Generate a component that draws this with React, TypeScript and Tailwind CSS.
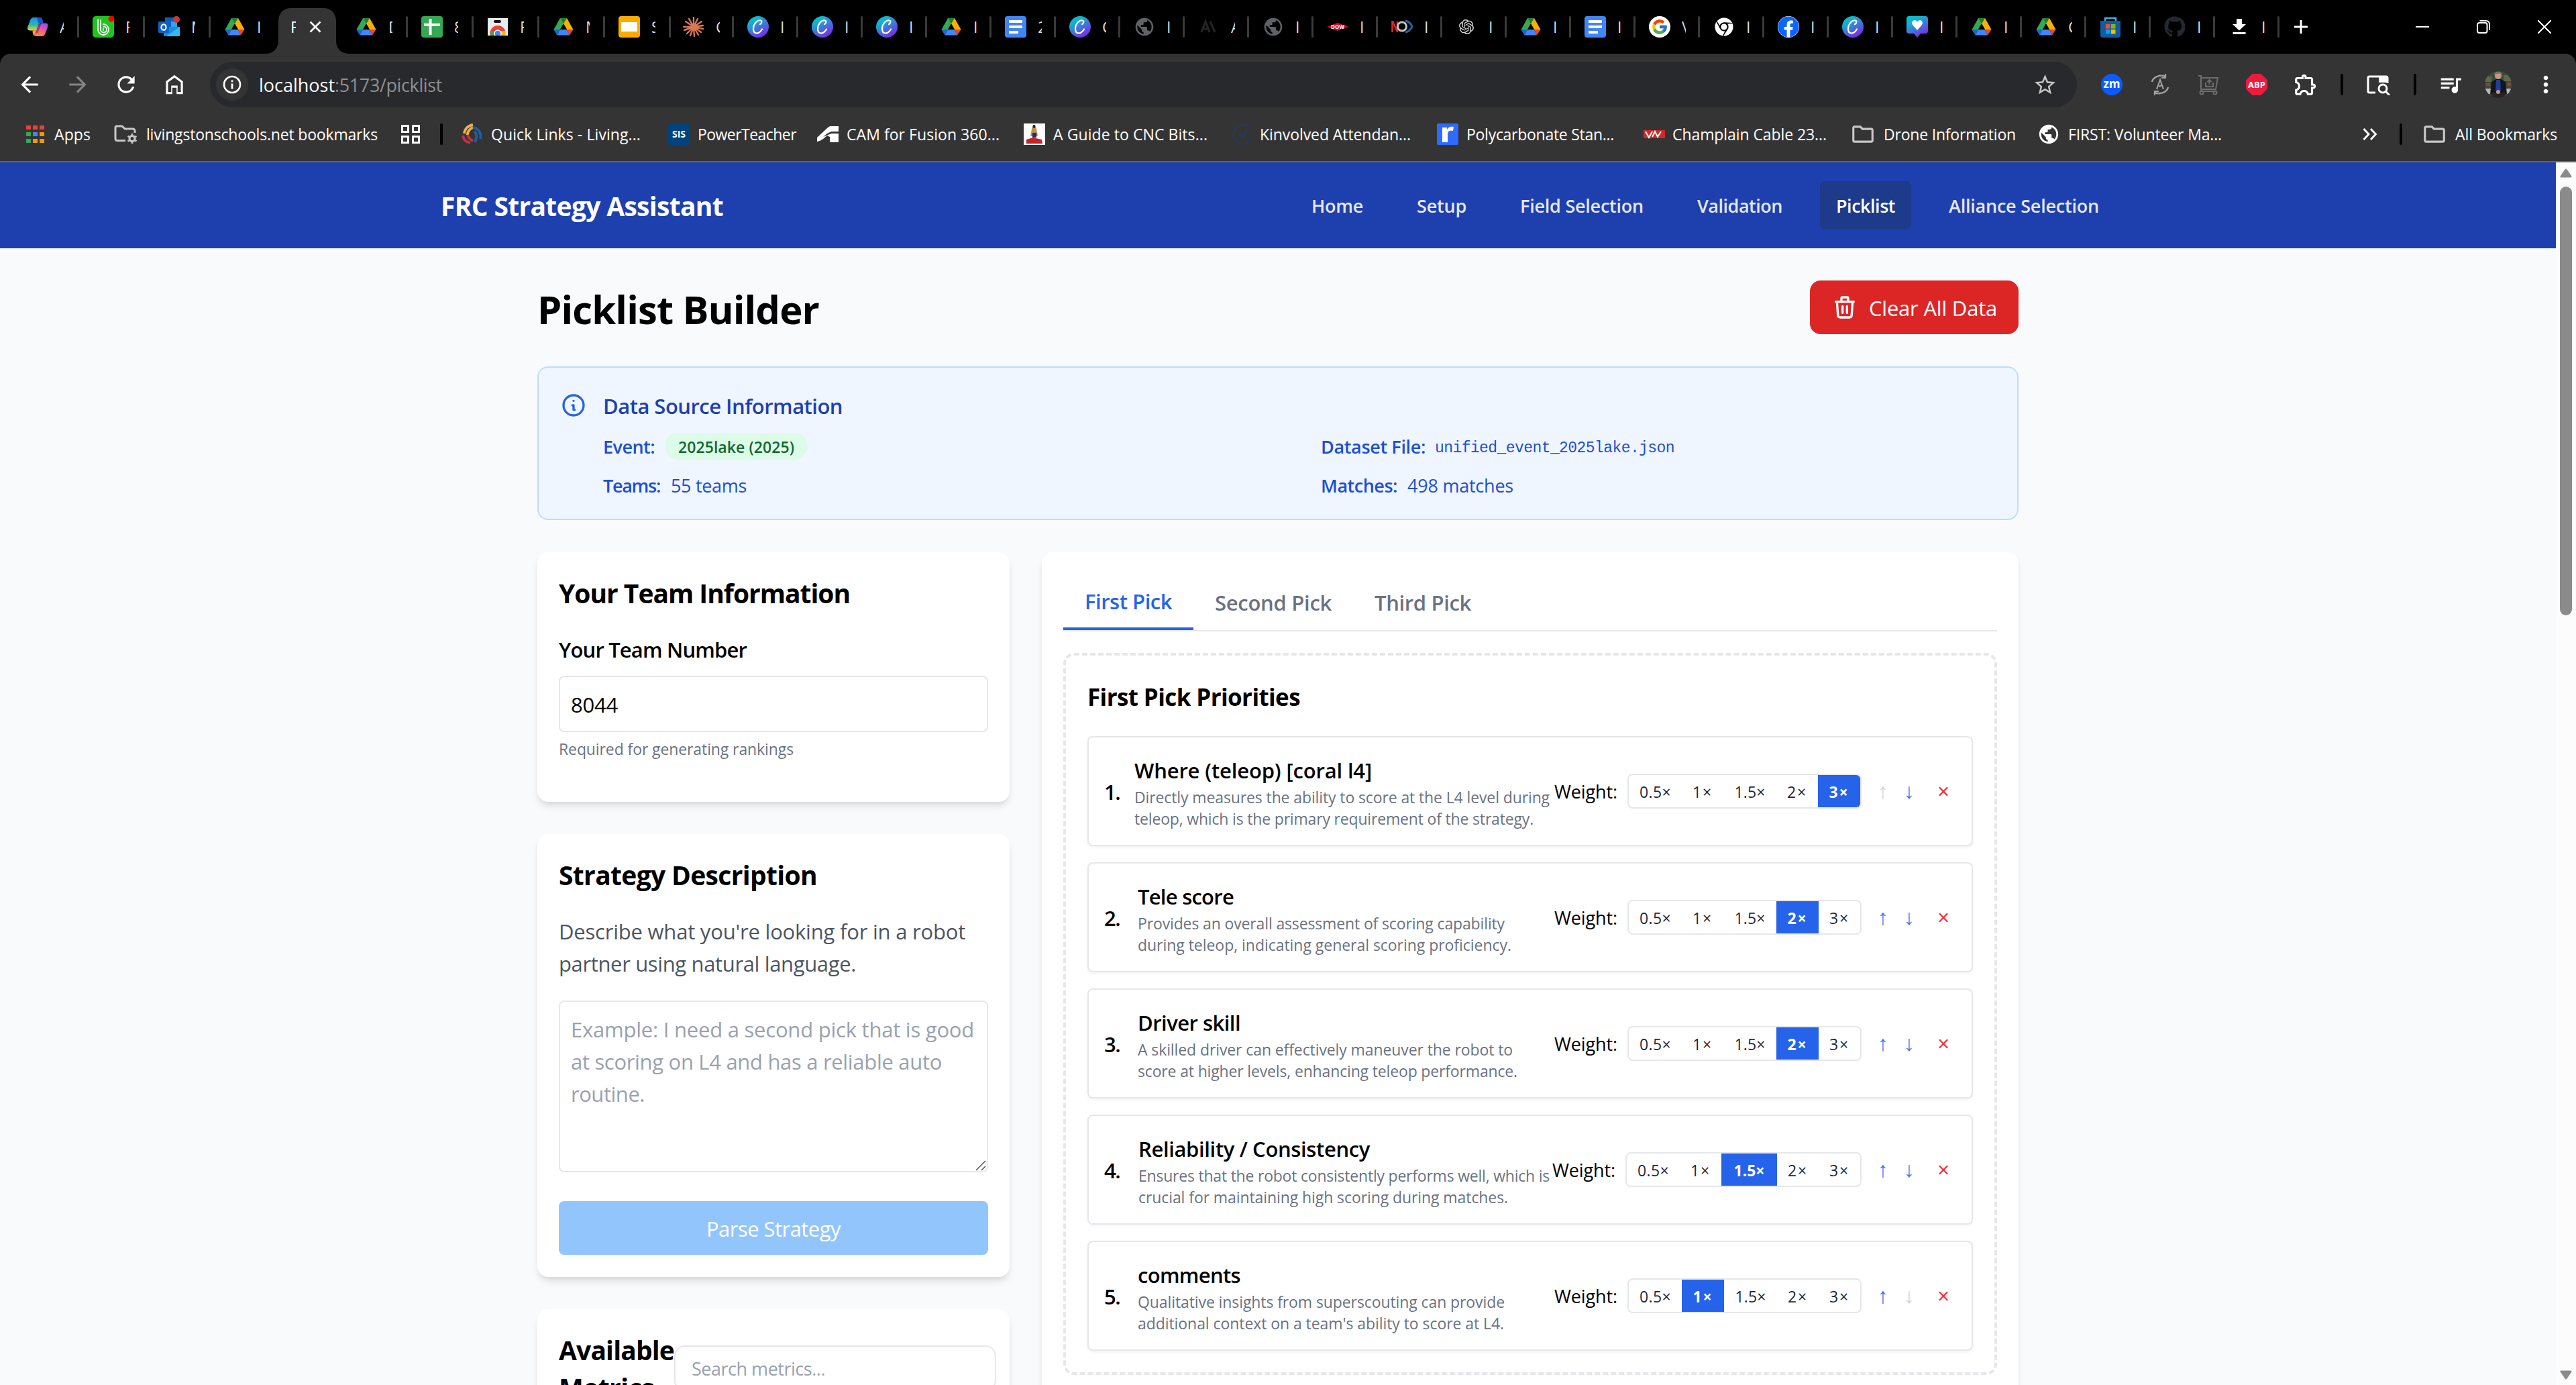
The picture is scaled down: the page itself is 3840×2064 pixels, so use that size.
import { useLayoutEffect, useRef, type ReactNode } from "react";
import { FaChrome, FaFacebook, FaGithub } from "react-icons/fa";
import { FcGoogle } from "react-icons/fc";
import { SiOpenai } from "react-icons/si";
import {
  MdArrowBack,
  MdArrowForward,
  MdMoreVert,
  MdOutlineExtension,
  MdOutlineFolder,
  MdPublic,
  MdQueueMusic,
  MdRefresh,
  MdStarBorder,
} from "react-icons/md";

/* One line of text whose tracking is adjusted so that it fills the width of its box. */
function Fit({ c, children }: { c: string; children: string }) {
  const box = useRef<HTMLSpanElement>(null);
  const line = useRef<HTMLSpanElement>(null);
  useLayoutEffect(() => {
    const b = box.current;
    const l = line.current;
    if (!b || !l) return;
    l.style.letterSpacing = "0px";
    const spare = b.clientWidth - l.getBoundingClientRect().width;
    l.style.letterSpacing = `${spare / children.length}px`;
  }, [children]);
  return (
    <span ref={box} className={`block shrink-0 whitespace-pre ${c}`}>
      <span ref={line} className="relative top-[0.03em]">
        {children}
      </span>
    </span>
  );
}

/* ---------- favicons ---------- */

const Drive = () => (
  <svg viewBox="0 0 32 32" className="size-8">
    <path d="M11 3h10l-5 8.5L6.500 27.500 1.500 20z" fill="#34a853" />
    <path d="M11 3h10l9.500 17h-9.500z" fill="#fbb000" />
    <path d="M11 3h10l-5 8.500z" fill="#188038" />
    <path d="M1.500 20h9.500l-4.500 8.500z" fill="#1967d2" />
    <path d="M11 20h10l4 8.500H6.500z" fill="#4285f4" />
    <path d="M21 20h9.500l-5.500 8.500z" fill="#ea4335" />
    <path d="M16 11.500l5 8.500H11z" fill="#000" />
  </svg>
);

const Canva = () => (
  <svg viewBox="0 0 32 32" className="size-8">
    <defs>
      <linearGradient id="cv" x1="0" y1="0" x2="0.6" y2="1">
        <stop offset="0" stopColor="#00c4cc" />
        <stop offset="0.3" stopColor="#12b3d0" />
        <stop offset="1" stopColor="#7d2ae8" />
      </linearGradient>
    </defs>
    <circle cx="16" cy="16" r="16" fill="url(#cv)" />
    <path
      d="M19 12c2.500-1 3.500-5 .5-5.500C14 6 9 12 9 19c0 4 2 6.500 5 6.500s6-2.500 8-6"
      fill="none"
      stroke="#fff"
      strokeWidth="2.200"
      strokeLinecap="round"
    />
  </svg>
);

const Docs = () => (
  <svg viewBox="0 0 32 32" className="size-8">
    <rect width="32" height="32" rx="4" fill="#4285f4" />
    <path d="M6 6h20v4H6zM6 14h20v4H6zM6 22h14v4H6z" fill="#fff" />
  </svg>
);

const Sheets = () => (
  <svg viewBox="0 0 32 32" className="size-8">
    <rect width="32" height="32" rx="4" fill="#34a853" />
    <path d="M11.500 4h4v7H28v4H15.500v13h-4V15H4v-4h7.500z" fill="#fff" />
  </svg>
);

const Slides = () => (
  <svg viewBox="0 0 32 32" className="size-8">
    <rect width="32" height="32" rx="4" fill="#f9ab00" />
    <rect x="4" y="9" width="24" height="14" fill="#fff" />
  </svg>
);

const Copilot = () => (
  <svg viewBox="0 0 32 32" className="size-8">
    <defs>
      <linearGradient id="cpa" x1="0" y1="0" x2="0" y2="1">
        <stop offset="0" stopColor="#1a8fe8" />
        <stop offset="0.55" stopColor="#26b8b0" />
        <stop offset="1" stopColor="#f2d21b" />
      </linearGradient>
      <linearGradient id="cpb" x1="0.7" y1="0" x2="0.3" y2="1">
        <stop offset="0" stopColor="#8f4df0" />
        <stop offset="0.5" stopColor="#ee5a9c" />
        <stop offset="1" stopColor="#ff8a3c" />
      </linearGradient>
    </defs>
    <path d="M10 2h9c2 0 3 2 2.300 4L16 18c-1 2.500-2 3.500-4 3.500H5c-4 0-4.500-3-3.500-6L5.500 5C6.300 3 8 2 10 2z" fill="url(#cpa)" />
    <path d="M14 2h6c2.500 0 3.500 3 4.500 8h-7c-1.500 0-1.500-8-3.500-8z" fill="#1b55c9" />
    <path d="M21 10.500h7c3.500 0 4 3 3 6l-4 10.500c-.8 2-2 3-4.500 3H14c-2 0-3-2-2.300-4L17 14c.8-2.500 2-3.500 4-3.500z" fill="url(#cpb)" />
    <path d="M17.500 11L12 26c-.6 2-1 4 2 4-5 0-5-3-5.500-8.500 5 0 6-1 9-10.500z" fill="#f4a04a" />
    <path d="M17 11l5-.5-6 15-3 .5c1-3 3-9 4-15z" fill="#000" opacity="0.35" />
  </svg>
);

const GreenB = () => (
  <svg viewBox="0 0 32 32" className="size-8">
    <rect width="32" height="32" rx="5" fill="#1fc41f" />
    <path d="M8 5v15a8 8 0 1 0 8-8M12 6v14a4.500 4.500 0 1 0 4.500-4.500M16 18.500v2.500" fill="none" stroke="#fff" strokeWidth="1.800" strokeLinecap="round" />
    <circle cx="28" cy="4" r="4.500" fill="#f00" />
  </svg>
);

const Outlook = () => (
  <svg viewBox="0 0 32 32" className="size-8">
    <path d="M10 2h18v16H10z" fill="#0f5cb5" />
    <path d="M19 8h9v8h-9z" fill="#28a8ea" />
    <path d="M8 16h24v14H8z" fill="#1490df" />
    <path d="M32 16v14H12z" fill="#35b8f1" />
    <rect x="0" y="8" width="16" height="17" rx="1.500" fill="#0a63c9" />
    <ellipse cx="8" cy="16.500" rx="3.500" ry="4.200" fill="none" stroke="#fff" strokeWidth="2.200" />
    <circle cx="27" cy="5" r="5" fill="#d13438" />
  </svg>
);

const WebStore = () => (
  <svg viewBox="0 0 32 32" className="size-8">
    <path d="M1 3h30v26H1z" fill="#e8eaed" />
    <rect x="10" y="6" width="11" height="4" rx="2" fill="#111" />
    <path d="M5 29a11 11 0 0 1 22-7H16z" fill="#ea4335" />
    <path d="M5 29c-.5-4 1-7 2-8l6 8z" fill="#34a853" />
    <path d="M16 22h11c1 2 1 5 0 7H18z" fill="#fbbc04" />
    <circle cx="16" cy="26" r="5" fill="#4285f4" stroke="#fff" strokeWidth="1.500" />
    <path d="M0 29h32v3H0z" fill="#000" />
  </svg>
);

const Claude = () => (
  <svg viewBox="0 0 32 32" className="size-8">
    <g stroke="#d97757" strokeWidth="2.400" strokeLinecap="round">
      <path d="M16 16V2M16 16l6-12M16 16l12-8M16 16l14-2M16 16l14 3M16 16l11 8M16 16l7 12M16 16l1 14M16 16l-5 13M16 16L6 26M16 16L2 21M16 16H1M16 16L4 8M16 16L9 4" />
    </g>
  </svg>
);

const Anthropic = () => (
  <svg viewBox="0 0 32 32" className="size-8">
    <path d="M5 24l6-16 6 16M7.500 19h7M18 8l7 16" fill="none" stroke="#242424" strokeWidth="3.200" />
  </svg>
);

const Dow = () => (
  <span className="relative flex size-8 items-center justify-center">
    <svg viewBox="0 0 32 32" className="absolute size-8">
      <path d="M0 16l16-6 16 6-16 6z" fill="#e4002b" />
    </svg>
    <span className="relative text-[8px] font-bold text-white">DOW</span>
  </span>
);

const FirstLogo = () => (
  <svg viewBox="0 0 32 32" className="size-8">
    <path d="M1.500 7v17M1.500 7l8 17M9 8v16" fill="none" stroke="#d9272e" strokeWidth="2.600" />
    <circle cx="16" cy="15.500" r="6.500" fill="none" stroke="#c4c4c4" strokeWidth="3" />
    <path d="M21 7c5 1 8 4 10 8.500-2 4.500-5 7.500-10 8.500" fill="none" stroke="#1b66b0" strokeWidth="3" />
  </svg>
);

const Heart = () => (
  <svg viewBox="0 0 32 32" className="size-8">
    <path d="M4 0h24a4 4 0 0 1 4 4v18a4 4 0 0 1-4 4h-7l-5 6-5-6H4a4 4 0 0 1-4-4V4a4 4 0 0 1 4-4z" fill="url(#cv)" />
    <path d="M16 21l-7-8c-2-3 0-7 3-7 2 0 3 1 4 3 1-2 2-3 4-3 3 0 5 4 3 7z" fill="#fff" />
  </svg>
);

const MsStore = () => (
  <svg viewBox="0 0 32 32" className="size-8">
    <path d="M8 8V3h16v5" fill="none" stroke="#29b6f6" strokeWidth="2.400" />
    <path d="M1 7h30v21a4 4 0 0 1-4 4H5a4 4 0 0 1-4-4z" fill="#135ba1" />
    <path d="M9 12h6.500v6.500H9z" fill="#f25022" />
    <path d="M17 12h6.500v6.500H17z" fill="#7fba00" />
    <path d="M9 20h6.500v6.500H9z" fill="#00a4ef" />
    <path d="M17 20h6.500v6.500H17z" fill="#ffb900" />
  </svg>
);

const Download = () => (
  <svg viewBox="0 0 32 32" className="size-8">
    <path d="M12 4h8v8h6L16 21.500 6 12h6zM6.500 24h19v3h-19z" fill="#fff" />
  </svg>
);

const Google = () => (
  <span className="flex size-8 items-center justify-center rounded-full bg-white">
    <FcGoogle className="size-[26px]" />
  </span>
);

type Tab = { icon?: ReactNode; label: string };

const canva: Tab = { icon: <Canva />, label: "I" };
const tabsA: Tab[] = [
  { icon: <Copilot />, label: "A" },
  { icon: <GreenB />, label: "F" },
  { icon: <Outlook />, label: "M" },
  { icon: <Drive />, label: "I" },
];
const tabsB: Tab[] = [
  { icon: <Drive />, label: "D" },
  { icon: <Sheets />, label: "8" },
  { icon: <WebStore />, label: "F" },
  { icon: <Drive />, label: "M" },
  { icon: <Slides />, label: "S" },
];
const tabsC: Tab[] = [
  canva,
  canva,
  canva,
  { icon: <Drive />, label: "I" },
  { icon: <Docs />, label: "2" },
  { icon: <Canva />, label: "C" },
  { icon: <MdPublic className="size-[34px] text-[#5f6368]" />, label: "I" },
  { icon: <Anthropic />, label: "A" },
  { icon: <MdPublic className="size-[34px] text-[#5f6368]" />, label: "I" },
  { icon: <Dow />, label: "I" },
  { icon: <FirstLogo />, label: "I" },
  { icon: <SiOpenai className="size-[22px] text-[#d8d8d8]" />, label: "I" },
  { icon: <Drive />, label: "I" },
  { icon: <Docs />, label: "I" },
  { icon: <Google />, label: "V" },
  { icon: <FaChrome className="size-7 text-white" />, label: "I" },
  { icon: <FaFacebook className="size-8 rounded-full bg-white text-[#0866ff]" />, label: "I" },
  canva,
  { icon: <Heart />, label: "I" },
  { icon: <Drive />, label: "I" },
  { icon: <Drive />, label: "C" },
  { icon: <MsStore />, label: "I" },
  { icon: <FaGithub className="size-8 text-[#24292f]" />, label: "I" },
  { icon: <Download />, label: "I" },
];

function TabCell({ tab, c, sep = true }: { tab: Tab; c: string; sep?: boolean }) {
  return (
    <div className={`flex h-20 shrink-0 items-center ${c}`}>
      <span className="flex w-8 shrink-0 justify-center">{tab.icon}</span>
      <span className="ml-[17px] w-[6px] overflow-hidden text-[23px] leading-[32px] text-[#dcdcdc]">{tab.label}</span>
      {sep && <span className="ml-auto h-8 w-[3px] rounded bg-[#3a3a3a]" />}
    </div>
  );
}

function TabStrip() {
  return (
    <div className="flex h-20 shrink-0 bg-black pl-5">
      {tabsA.map((t, i) => (
        <TabCell key={i} tab={t} c="w-[98px] pl-5" sep={i < 3} />
      ))}
      <div className="relative flex w-[98px] shrink-0 items-end">
        <svg viewBox="0 0 124 68" className="absolute bottom-0 left-[-16px] h-[68px] w-[124px]">
          <path d="M0 68C12 68 19 60 19 48V20C19 8 26 0 38 0H86C98 0 105 8 105 20V48C105 60 112 68 124 68z" fill="#343434" />
        </svg>
        <div className="relative flex h-20 w-full items-center pl-[21px]">
          <span className="w-[8px] overflow-hidden text-[23px] leading-[32px] text-white">F</span>
          <svg viewBox="0 0 18 18" className="ml-[20px] size-[18px]">
            <path d="M1.500 1.500l15 15M16.500 1.500l-15 15" stroke="#fff" strokeWidth="2.600" />
          </svg>
        </div>
      </div>
      {tabsB.map((t, i) => (
        <TabCell key={i} tab={t} c="w-[98px] pl-5" />
      ))}
      <TabCell tab={{ icon: <Claude />, label: "C" }} c="w-[94px] pl-[18px]" />
      {tabsC.map((t, i) => (
        <TabCell key={i} tab={t} c="w-[96px] pl-5" />
      ))}
      <div className="flex flex-1 items-center pl-[22px]">
        <svg viewBox="0 0 20 20" className="size-5">
          <path d="M10 0v20M0 10h20" stroke="#fff" strokeWidth="3" />
        </svg>
        <svg viewBox="0 0 20 20" className="ml-[161px] size-5">
          <path d="M0 10h20" stroke="#fff" strokeWidth="2" />
        </svg>
        <svg viewBox="0 0 20 20" className="ml-[71px] size-5">
          <rect x="1" y="4" width="14.500" height="15" rx="3" fill="none" stroke="#fff" strokeWidth="2" />
          <path d="M4.500 1H14a5 5 0 0 1 5 5v9" fill="none" stroke="#fff" strokeWidth="2" />
        </svg>
        <svg viewBox="0 0 20 20" className="ml-[71px] size-5">
          <path d="M0 0l20 20M20 0L0 20" stroke="#fff" strokeWidth="2" />
        </svg>
      </div>
    </div>
  );
}

const Bar = ({ c }: { c: string }) => <span className={`h-8 w-1 shrink-0 rounded-sm bg-black ${c}`} />;

function Toolbar() {
  return (
    <div className="bg-black">
      <div className="flex h-[92px] items-center rounded-t-[16px] bg-[#343434] pl-[25px] text-white">
        <MdArrowBack className="size-[38px] shrink-0" />
        <MdArrowForward className="ml-[34px] size-[38px] shrink-0 text-[#838383]" />
        <MdRefresh className="ml-[34px] size-[38px] shrink-0" />
        <svg viewBox="0 0 24 24" className="ml-[34px] size-[38px] shrink-0" fill="currentColor">
          <path d="M6 19h3v-6h6v6h3v-9l-6-4.500L6 10zm-2 2V9l8-6 8 6v12h-6v-6h-4v6z" />
        </svg>
        <div className="ml-[34px] flex h-[68px] w-[2783px] shrink-0 items-center rounded-full bg-[#28292c] pl-[9px] pr-[29px]">
          <span className="flex size-12 items-center justify-center rounded-full bg-[#343434]">
            <svg viewBox="0 0 28 28" className="size-7">
              <circle cx="14" cy="14" r="12" fill="none" stroke="#fff" strokeWidth="2.600" />
              <path d="M14 12.500v8M14 7.500v2.800" stroke="#fff" strokeWidth="2.800" />
            </svg>
          </span>
          <Fit c="ml-[16px] w-[113px] text-[27px] leading-[36px] text-white">localhost</Fit>
          <Fit c="w-[160px] text-[27px] leading-[36px] text-[#8d8f92]">:5173/picklist</Fit>
          <MdStarBorder className="ml-auto size-[37px] text-[#c7c7c7]" />
        </div>
        <span className="ml-[36px] flex size-8 shrink-0 items-center justify-center rounded-full bg-[#0b5cff] pb-1 text-[17px] font-bold leading-none">
          zm
        </span>
        <svg viewBox="0 0 32 32" className="ml-10 size-8 shrink-0" fill="none" stroke="#a0a0a0" strokeWidth="2.600">
          <path d="M4 12C6 4 16 1 24 4M28 20c-2 8-12 11-20 8" />
          <path d="M24 0v6h-6M8 32v-6h6M11 23l5-14 5 14M14 19l5-2" strokeWidth="2.200" />
        </svg>
        <svg viewBox="0 0 32 32" className="ml-10 size-8 shrink-0" fill="none" stroke="#6e6e6e" strokeWidth="2">
          <path d="M1 3h4v23M5 6h25l-3 17H5M5 26h22M12 13v6h11v-6M17.500 16V10M14.500 12l3-3 3 3" />
          <circle cx="6" cy="28" r="2.500" />
          <circle cx="26" cy="28" r="2.500" />
        </svg>
        <span className="relative ml-10 flex size-8 shrink-0 items-center justify-center">
          <svg viewBox="0 0 32 32" className="absolute size-8">
            <path d="M9.500 0h13L32 9.500v13L22.500 32h-13L0 22.500v-13z" fill="#ed1c3f" />
          </svg>
          <span className="relative text-[13px] font-bold leading-none">ABP</span>
        </span>
        <MdOutlineExtension className="ml-[38px] size-[38px] shrink-0" />
        <Bar c="ml-[33px]" />
        <svg viewBox="0 0 36 32" className="ml-[34px] h-8 w-9 shrink-0">
          <path d="M14 28H5a2 2 0 0 1-2-2V6a2 2 0 0 1 2-2h25a2 2 0 0 1 2 2v8" fill="none" stroke="#fff" strokeWidth="3" />
          <path d="M19 3h13v10H19z" fill="#fff" />
          <circle cx="25" cy="22" r="6" fill="none" stroke="#fff" strokeWidth="3" />
          <path d="M29 26l6 6" stroke="#fff" strokeWidth="3" />
        </svg>
        <Bar c="ml-[35px]" />
        <MdQueueMusic className="ml-[32px] size-[38px] shrink-0" />
        <svg viewBox="0 0 40 40" className="ml-[32px] size-10 shrink-0">
          <defs>
            <clipPath id="av">
              <circle cx="20" cy="20" r="20" />
            </clipPath>
          </defs>
          <g clipPath="url(#av)">
            <rect width="40" height="40" fill="#3d4a36" />
            <path d="M0 26h40v8H0z" fill="#b9b4b0" />
            <path d="M0 8h10v8H0zM28 6h12v9H28z" fill="#5c6a48" />
            <path d="M2 18h6v4H2zM33 17h6v5h-6z" fill="#8e3f3a" />
            <path d="M10 16l7-4h7l7 4 2 18H8z" fill="#14161f" />
            <path d="M17 13h6l1 16h-8z" fill="#1c3f9c" />
            <circle cx="20" cy="7" r="5" fill="#c79a80" />
            <path d="M14 6c0-7 12-7 12 0l-2-2h-8z" fill="#777" />
            <path d="M10 32h20v8H10z" fill="#2a2322" />
            <circle cx="20" cy="31" r="3" fill="#c79a80" />
          </g>
        </svg>
        <MdMoreVert className="ml-[31px] size-[40px] shrink-0" />
      </div>
    </div>
  );
}

function Bookmark({ icon, c, w, children }: { icon: ReactNode; c: string; w: string; children: string }) {
  return (
    <div className={`flex h-9 shrink-0 items-center ${c}`}>
      {icon}
      <Fit c={w}>{children}</Fit>
    </div>
  );
}

const Folder = () => <MdOutlineFolder className="size-[38px] text-[#c7c7c7]" />;

function Bookmarks() {
  return (
    <div className="flex h-[68px] shrink-0 items-start bg-[#343434] pl-[39px] pt-[10px] text-[23px] leading-[34px] text-white">
      <Bookmark
        c=""
        w="ml-[15px] w-[54px] pb-0.5"
        icon={
          <svg viewBox="0 0 27 27" className="size-[27px]">
            <path d="M0 0h7v6H0zM10 0h7v6h-7zM20 0h7v6h-7z" fill="#ea4335" />
            <path d="M0 10h7v6H0z" fill="#34a853" />
            <path d="M10 10h7v6h-7z" fill="#4285f4" />
            <path d="M20 10h7v6h-7zM10 20h7v6h-7zM20 20h7v6h-7z" fill="#f29900" />
            <path d="M0 20h7v6H0z" fill="#34a853" />
          </svg>
        }
      >
        Apps
      </Bookmark>
      <Bookmark
        c="ml-[35px]"
        w="ml-[13px] w-[345px] pb-0.5"
        icon={
          <svg viewBox="0 0 35 28" className="h-7 w-[35px]" fill="none" stroke="#c7c7c7" strokeWidth="3">
            <path d="M17 23.500H4.500A2.500 2.500 0 0 1 2 21V4a2 2 0 0 1 2-2h8l4 4h12a3 3 0 0 1 3 3v3" />
            <circle cx="27" cy="20.500" r="4" />
            <path d="M27 13v3M27 25v3M20.500 16.800l2.600 1.500M30.900 22.800l2.600 1.500M33.500 16.800l-2.600 1.500M23.100 22.800l-2.600 1.500" strokeWidth="2.600" />
          </svg>
        }
      >
        livingstonschools.net bookmarks
      </Bookmark>
      <div className="ml-[35px] flex h-9 items-center">
        <svg viewBox="0 0 28 28" className="size-7" fill="none" stroke="#fff" strokeWidth="3">
          <path d="M1.500 1.500h9v9h-9zM17.500 1.500h9v9h-9zM1.500 17.500h9v9h-9zM17.500 17.500h9v9h-9z" />
        </svg>
        <Bar c="ml-[30px]" />
      </div>
      <Bookmark
        c="ml-[28px]"
        w="ml-[12px] w-[223px] pb-0.5"
        icon={
          <svg viewBox="0 0 32 32" className="size-8" fill="none" strokeWidth="4">
            <path d="M4 15C5 8 10 3 17 2M9 17c0-5 3-9 8-11" stroke="#e9b04e" />
            <path d="M17 6c8 1 13 8 11 17M19 12c4 3 4 9 1 16" stroke="#1b5ea8" />
            <path d="M2 18c1 6 5 10 11 11M9 17c1 4 4 7 8 9" stroke="#c0343f" />
          </svg>
        }
      >
        Quick Links - Living...
      </Bookmark>
      <Bookmark
        c="ml-[41px]"
        w="ml-[12px] w-[147px] pb-0.5"
        icon={
          <span className="flex size-8 items-center justify-center rounded-[4px] bg-[#00427c] text-[14px] font-bold leading-none">SIS</span>
        }
      >
        PowerTeacher
      </Bookmark>
      <Bookmark
        c="ml-[31px]"
        w="ml-[12px] w-[228px] pb-0.5"
        icon={
          <svg viewBox="0 0 32 32" className="size-8">
            <path d="M0 27V21L15 7l4-3h13v8H21l-6 3-6 5 12-5h11v13H19v-8l-4-2-6 5-5 3z" fill="#fff" />
          </svg>
        }
      >
        CAM for Fusion 360...
      </Bookmark>
      <Bookmark
        c="ml-[36px]"
        w="ml-[12px] w-[230px] pb-0.5"
        icon={
          <svg viewBox="0 0 32 32" className="size-8">
            <rect width="32" height="32" fill="#fff" />
            <path d="M13 3h5l3 16H10z" fill="#b8924a" />
            <path d="M14 2h3v5h-3zM13 14h6v7h-6z" fill="#222a7a" />
            <path d="M4 24l10-3 13 3 1 6H4z" fill="#c4242b" />
          </svg>
        }
      >
        A Guide to CNC Bits...
      </Bookmark>
      <Bookmark
        c="ml-[37px]"
        w="ml-[9px] w-[225px] pb-0.5"
        icon={
          <svg viewBox="0 0 32 32" className="size-8" fill="none" stroke="#233a62" strokeWidth="2">
            <path d="M27 8A14 14 0 1 0 27 25" />
            <path d="M12 16l4 4 6-9" strokeWidth="3" />
          </svg>
        }
      >
        Kinvolved Attendan...
      </Bookmark>
      <Bookmark
        c="ml-[39px]"
        w="ml-[12px] w-[220px] pb-0.5"
        icon={
          <svg viewBox="0 0 32 32" className="size-8">
            <rect width="32" height="32" rx="2" fill="#2f6bff" />
            <path d="M8 6h7v3c2-4 6-5 10-4l-1 6c-5-1-8 0-8 5v12H8z" fill="#fff" />
          </svg>
        }
      >
        Polycarbonate Stan...
      </Bookmark>
      <Bookmark
        c="ml-[44px]"
        w="ml-[11px] w-[230px] pb-0.5"
        icon={
          <svg viewBox="0 0 32 32" className="size-8">
            <path d="M0 10h32v12H0z" fill="#cf2a27" />
            <path d="M3 12l5 9 5-9M13 20l4-8 4 8 5-8" fill="none" stroke="#fff" strokeWidth="2" />
          </svg>
        }
      >
        Champlain Cable 23...
      </Bookmark>
      <Bookmark c="ml-[35px]" w="ml-[12px] w-[197px] pb-0.5" icon={<Folder />}>
        Drone Information
      </Bookmark>
      <Bookmark c="ml-[32px]" w="ml-[12px] w-[229px] pb-0.5" icon={<MdPublic className="size-[34px]" />}>
        FIRST: Volunteer Ma...
      </Bookmark>
      <div className="ml-auto flex h-9 items-center pr-[28px]">
        <svg viewBox="0 0 22 18" className="h-[18px] w-[22px]" fill="none" stroke="#fff" strokeWidth="2.800">
          <path d="M1.500 1l7.500 8-7.500 8M12 1l7.500 8-7.500 8" />
        </svg>
        <Bar c="ml-[33px]" />
        <span className="ml-[29px] mr-[12px]">
          <Folder />
        </span>
        <Fit c="w-[152px] pb-0.5">All Bookmarks</Fit>
      </div>
    </div>
  );
}

/* ---------- page ---------- */

const links: [string, string][] = [
  ["Home", "w-[77px]"],
  ["Setup", "w-[74px]"],
  ["Field Selection", "w-[184px]"],
  ["Validation", "w-[127px]"],
  ["Picklist", "w-[88px]"],
  ["Alliance Selection", "w-[224px]"],
];

function Nav() {
  return (
    <nav className="flex h-32 shrink-0 items-center bg-[#1e40af] pl-[657px] pr-[657px]">
      <Fit c="w-[421px] text-[39px] font-bold leading-[56px] text-white">FRC Strategy Assistant</Fit>
      <div className="ml-auto flex gap-8">
        {links.map(([label, w]) => (
          <div
            key={label}
            className={`flex h-[72px] items-center rounded-[8px] px-6 text-[27px] font-semibold leading-[40px] ${
              label === "Picklist" ? "bg-[#1e3a8a] text-white" : "text-gray-200"
            }`}
          >
            <Fit c={w}>{label}</Fit>
          </div>
        ))}
      </div>
    </nav>
  );
}

function InfoBox() {
  return (
    <section className="mt-12 flex h-[229px] rounded-[16px] border-2 border-[#bfdbfe] bg-[#eff6ff] p-8 text-[#1d4ed8]">
      <svg viewBox="0 0 24 24" className="mt-1 size-10 shrink-0" fill="none" stroke="#2563eb" strokeWidth="2" strokeLinecap="round" strokeLinejoin="round">
        <path d="M13 16h-1v-4h-1m1-4h.01M21 12a9 9 0 11-18 0 9 9 0 0118 0z" />
      </svg>
      <div className="ml-6 flex-1">
        <Fit c="w-[357px] text-[31px] font-semibold leading-[48px] text-[#1e40af]">Data Source Information</Fit>
        <div className="mt-[17px] grid grid-cols-2 gap-x-16 gap-y-4 text-[27px] leading-[40px]">
          <div className="flex">
            <Fit c="w-[77px] font-semibold">Event:</Fit>
            <div className="ml-[15px] h-10 rounded-full bg-[#dcfce7] px-5">
              <Fit c="w-[173px] text-[23px] font-semibold leading-[40px] text-[#166534]">2025lake (2025)</Fit>
            </div>
          </div>
          <div className="flex">
            <Fit c="w-[156px] font-semibold">Dataset File:</Fit>
            <Fit c="ml-[14px] w-[357px] pt-0.5 font-['Liberation_Mono',monospace] text-[23px]">unified_event_2025lake.json</Fit>
          </div>
          <div className="flex">
            <Fit c="w-[85px] font-semibold">Teams:</Fit>
            <Fit c="ml-[16px] w-[113px]">55 teams</Fit>
          </div>
          <div className="flex">
            <Fit c="w-[114px] font-semibold">Matches:</Fit>
            <Fit c="ml-[15px] w-[158px]">498 matches</Fit>
          </div>
        </div>
      </div>
    </section>
  );
}

const cardShadow = "rounded-[16px] bg-white p-8 shadow-[0_8px_12px_-2px_rgba(0,0,0,0.1),0_4px_8px_-4px_rgba(0,0,0,0.1)]";

function LeftColumn() {
  return (
    <div className="flex w-[704px] shrink-0 flex-col gap-12">
      <section className={`h-[372px] shrink-0 ${cardShadow}`}>
        <Fit c="w-[434px] text-[39px] font-bold leading-[56px]">Your Team Information</Fit>
        <Fit c="mt-8 w-[280px] text-[31px] font-semibold leading-[48px]">Your Team Number</Fit>
        <div className="mt-4 h-[84px] rounded-[8px] border-2 border-gray-200 p-4">
          <Fit c="w-[70px] text-[31px] leading-[48px]">8044</Fit>
        </div>
        <Fit c="mt-2 w-[350px] text-[23px] leading-[32px] text-gray-500">Required for generating rankings</Fit>
      </section>
      <section className={`h-[660px] shrink-0 ${cardShadow}`}>
        <Fit c="w-[385px] text-[39px] font-bold leading-[56px]">Strategy Description</Fit>
        <div className="mt-8 text-[31px] leading-[48px] text-[#4b5563]">
          <Fit c="w-[606px]">Describe what you're looking for in a robot</Fit>
          <Fit c="w-[443px]">partner using natural language.</Fit>
        </div>
        <div className="relative mt-8 h-[256px] rounded-[8px] border-2 border-gray-200 p-4 text-[31px] leading-[48px] text-gray-400">
          <Fit c="w-[601px]">Example: I need a second pick that is good</Fit>
          <Fit c="w-[553px]">at scoring on L4 and has a reliable auto</Fit>
          <Fit c="w-[110px]">routine.</Fit>
          <svg viewBox="0 0 16 16" className="absolute bottom-0 right-[1px] size-4" stroke="#555" strokeWidth="1.500">
            <path d="M1 15L15 1M9 15l6-6" />
          </svg>
        </div>
        <div className="mt-[43px] flex h-20 items-center justify-center rounded-[8px] bg-[#93c5fd] text-white">
          <Fit c="w-[200px] text-[31px] leading-[48px]">Parse Strategy</Fit>
        </div>
      </section>
      <section className={`h-[400px] shrink-0 ${cardShadow}`}>
        <div className="flex items-center text-[39px] font-bold leading-[56px]">
          <div className="w-[172px] shrink-0">
            <Fit c="w-[172px]">Available</Fit>
            <Fit c="w-[142px]">Metrics</Fit>
          </div>
          <div className="h-[68px] w-[480px] shrink-0 rounded-[16px] border-2 border-gray-200 px-6 py-3 font-normal text-gray-400">
            <Fit c="w-[199px] text-[27px] leading-[40px]">Search metrics...</Fit>
          </div>
        </div>
      </section>
    </div>
  );
}

type Item = {
  n: string;
  nw: string;
  title: string;
  tw: string;
  a: string;
  aw: string;
  b: string;
  bw: string;
  active: number;
};

const items: Item[] = [
  {
    n: "1.", nw: "w-[44px]", title: "Where (teleop) [coral l4]", tw: "w-[354px]",
    a: "Directly measures the ability to score at the L4 level during", aw: "w-[619px]",
    b: "teleop, which is the primary requirement of the strategy.", bw: "w-[595px]", active: 4,
  },
  {
    n: "2.", nw: "w-[49px]", title: "Tele score", tw: "w-[143px]",
    a: "Provides an overall assessment of scoring capability", aw: "w-[547px]",
    b: "during teleop, indicating general scoring proficiency.", bw: "w-[557px]", active: 3,
  },
  {
    n: "3.", nw: "w-[49px]", title: "Driver skill", tw: "w-[153px]",
    a: "A skilled driver can effectively maneuver the robot to", aw: "w-[559px]",
    b: "score at higher levels, enhancing teleop performance.", bw: "w-[566px]", active: 3,
  },
  {
    n: "4.", nw: "w-[50px]", title: "Reliability / Consistency", tw: "w-[345px]",
    a: "Ensures that the robot consistently performs well, which is", aw: "w-[613px]",
    b: "crucial for maintaining high scoring during matches.", bw: "w-[551px]", active: 2,
  },
  {
    n: "5.", nw: "w-[49px]", title: "comments", tw: "w-[153px]",
    a: "Qualitative insights from superscouting can provide", aw: "w-[547px]",
    b: "additional context on a team's ability to score at L4.", bw: "w-[546px]", active: 1,
  },
];

const weights: [string, string, string, string][] = [
  ["0.5×", "w-[79px]", "w-[81px]", "w-[47px]"],
  ["1×", "w-[62px]", "w-[63px]", "w-[30px]"],
  ["1.5×", "w-[79px]", "w-[83px]", "w-[46px]"],
  ["2×", "w-[62px]", "w-[63px]", "w-[30px]"],
  ["3×", "w-[62px]", "w-[63px]", "w-[30px]"],
];

function PriorityRow({ item, i }: { item: Item; i: number }) {
  return (
    <div className="flex h-[164px] shrink-0 items-center rounded-[8px] border-2 border-gray-200 bg-white pl-6 shadow-[0_2px_4px_rgba(0,0,0,0.05)]">
      <div className={`shrink-0 text-[31px] font-semibold leading-[48px] ${item.nw}`}>
        <span className="relative right-px top-px tracking-[-1.5px]">{item.n}</span>
      </div>
      <div>
        <Fit c={`text-[31px] font-semibold leading-[48px] ${item.tw}`}>{item.title}</Fit>
        <div className="text-[23px] leading-[32px] text-gray-500">
          <Fit c={item.aw}>{item.a}</Fit>
          <Fit c={item.bw}>{item.b}</Fit>
        </div>
      </div>
      <div className="ml-auto flex items-center pr-[33px]">
        <Fit c="w-[94px] text-[27px] leading-[40px]">Weight:</Fit>
        <div className="ml-[15px] flex h-[52px] overflow-hidden rounded-[8px] border-2 border-gray-200 text-[23px] leading-[48px] text-[#1f2937]">
          {weights.map(([label, w, wActive, textW], k) => (
            <div
              key={label}
              className={`flex h-12 justify-center ${k === item.active ? `bg-[#2563eb] font-bold text-white ${wActive}` : w}`}
            >
              <Fit c={textW}>{label}</Fit>
            </div>
          ))}
        </div>
        <div className="ml-6 flex items-center font-['Liberation_Sans',sans-serif] text-[32px] leading-[40px]">
          <span className={`flex w-4 justify-center ${i === 0 ? "text-gray-300" : "text-blue-500"}`}>↑</span>
          <span className={`ml-[23px] flex w-4 justify-center ${i === 4 ? "text-gray-300" : "text-blue-500"}`}>↓</span>
          <span className="ml-[34px] flex w-[18px] justify-center pt-0.5 text-[31px] text-red-500">×</span>
        </div>
      </div>
    </div>
  );
}

function RightColumn() {
  return (
    <section className={`h-[1600px] min-w-0 flex-1 ${cardShadow}`}>
      <div className="flex items-center border-b-2 border-gray-200 text-[31px] font-semibold leading-[48px] text-gray-500">
        <div className="border-b-4 border-[#2563eb] px-8 py-4 text-[#2563eb]">
          <Fit c="w-[130px]">First Pick</Fit>
        </div>
        <div className="px-8 py-4">
          <Fit c="w-[174px]">Second Pick</Fit>
        </div>
        <div className="px-8 py-4">
          <Fit c="w-[144px]">Third Pick</Fit>
        </div>
      </div>
      <div className="mt-8 flex flex-col rounded-[16px] border-4 border-dashed border-gray-200 p-8">
        <Fit c="w-[317px] text-[35px] font-bold leading-[57px]">First Pick Priorities</Fit>
        <div className="mt-[31px] flex flex-col gap-6">
          {items.map((item, i) => (
            <PriorityRow key={item.n} item={item} i={i} />
          ))}
        </div>
      </div>
    </section>
  );
}

function Scrollbar() {
  return (
    <div className="flex w-[30px] shrink-0 flex-col items-center bg-[#fcfcfc]">
      <svg viewBox="0 0 18 14" className="mt-[9px] h-[14px] w-[18px] shrink-0">
        <path d="M9 2L16 12H2z" fill="#8b8b8b" stroke="#8b8b8b" strokeWidth="3" strokeLinejoin="round" />
      </svg>
      <div className="mt-[13px] h-[639px] w-[18px] shrink-0 rounded-full bg-[#8b8b8b]" />
      <svg viewBox="0 0 18 14" className="mb-[8px] mt-auto h-[14px] w-[18px] shrink-0">
        <path d="M9 12L2 2h14z" fill="#8b8b8b" stroke="#8b8b8b" strokeWidth="3" strokeLinejoin="round" />
      </svg>
    </div>
  );
}

export default function App() {
  return (
    <div className="flex h-[2064px] w-[3840px] flex-col overflow-hidden bg-[#f9fafb] font-['Open_Sans','Noto_Sans',sans-serif] text-black">
      <TabStrip />
      <Toolbar />
      <Bookmarks />
      <div className="h-[2px] shrink-0 bg-[#666]" />
      <div className="flex min-h-0 flex-1">
        <div className="min-w-0 flex-1 overflow-hidden">
          <Nav />
          <main className="mx-auto w-[2208px] pt-12">
            <div className="flex h-20 items-center justify-between">
              <Fit c="w-[420px] pt-0.5 text-[58px] font-bold leading-[72px]">Picklist Builder</Fit>
              <div className="flex h-20 items-center rounded-[16px] bg-[#dc2626] px-8 text-white">
                <svg viewBox="0 0 24 24" className="size-10" fill="none" stroke="currentColor" strokeWidth="2" strokeLinecap="round" strokeLinejoin="round">
                  <path d="M19 7l-.867 12.142A2 2 0 0116.138 21H7.862a2 2 0 01-1.995-1.858L5 7m5 4v6m4-6v6m1-10V4a1 1 0 00-1-1h-4a1 1 0 00-1 1v3M4 7h16" />
                </svg>
                <Fit c="ml-4 w-[191px] text-[31px] leading-[48px]">Clear All Data</Fit>
              </div>
            </div>
            <InfoBox />
            <div className="mt-12 flex gap-12">
              <LeftColumn />
              <RightColumn />
            </div>
          </main>
        </div>
        <Scrollbar />
      </div>
    </div>
  );
}
